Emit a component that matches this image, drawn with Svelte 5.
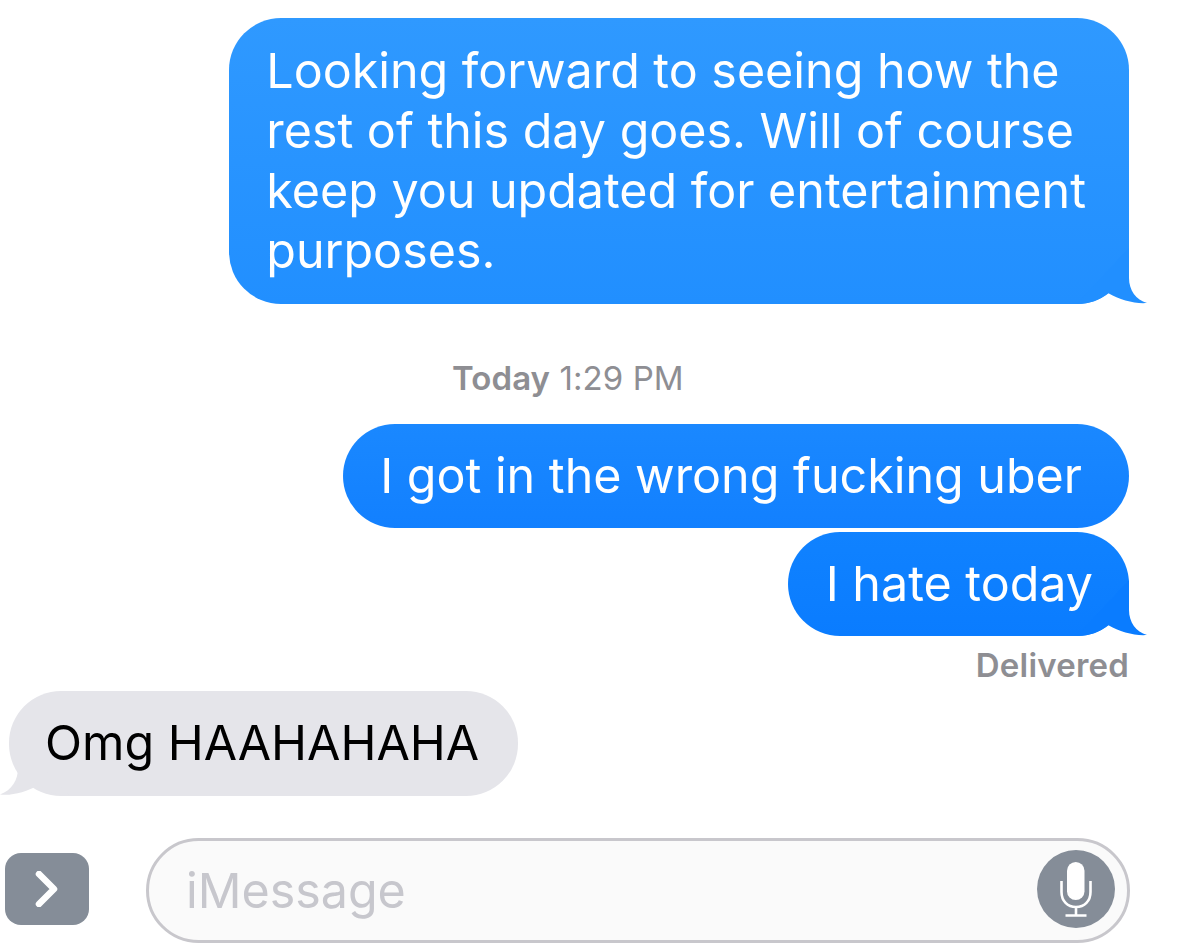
<script>
  const tailRight = "M52 0 V30 C52 42 59 52 70 55 C58 56 43 52 31 45 C23 52 13 56 0 56 Z";
  const tailLeft = "M18 0 V28 C18 40 12 50 0 54.5 C12 56 26 52 39 45 C47 52 57 56 70 56 Z";
</script>

<main class="page">
  <div class="thread">
    <div class="bubble out first">
      <span>Looking forward to seeing how the<br />rest of this day goes. Will of course<br />keep you updated for entertainment<br />purposes.</span>
      <svg class="tail right" width="70" height="56" viewBox="0 0 70 56"><path d={tailRight} fill="#218fff" /></svg>
    </div>

    <p class="stamp"><b>Today</b> 1:29 PM</p>

    <div class="bubble out second"><span>I got in the wrong fucking uber</span></div>
    <div class="bubble out third">
      <span>I hate today</span>
      <svg class="tail right" width="70" height="56" viewBox="0 0 70 56"><path d={tailRight} fill="#0a7cff" /></svg>
    </div>

    <p class="delivered">Delivered</p>

    <div class="bubble in">
      <span>Omg HAAHAHAHA</span>
      <svg class="tail left" width="70" height="56" viewBox="0 0 70 56"><path d={tailLeft} fill="#e5e5ea" /></svg>
    </div>
  </div>

  <div class="composer">
    <button class="expand" aria-label="Expand">
      <svg width="24" height="36" viewBox="0 0 24 36"><path d="M4 3 L19 18 L4 33" fill="none" stroke="#fff" stroke-width="6.5" stroke-linecap="round" stroke-linejoin="round" /></svg>
    </button>
    <div class="field">
      <span class="placeholder">iMessage</span>
      <span class="mic">
        <svg width="78" height="78" viewBox="0 0 78 78">
          <rect x="30" y="12" width="17.5" height="38" rx="8.75" fill="#fff" />
          <path d="M24.5 31 V42 C24.5 51 30.5 57 39 57 C47.5 57 53.5 51 53.5 42 V31 M39 57 V65 M28.5 65.5 H49.5" fill="none" stroke="#fff" stroke-width="2.6" />
        </svg>
      </span>
    </div>
  </div>
</main>

<style>
  :global(body) {
    margin: 0;
    background: #fff;
  }

  .page {
    width: 1190px;
    height: 948px;
    overflow: hidden;
    font-family: Inter, "Liberation Sans", sans-serif;
    background: #fff;
  }

  .thread {
    display: flex;
    flex-direction: column;
    align-items: flex-end;
    padding: 18px 61px 0 9px;
  }

  .bubble {
    position: relative;
    box-sizing: border-box;
    padding: 22px 37px;
    border-radius: 52px;
    font-size: 48.4px;
    line-height: 60px;
    white-space: nowrap;
  }

  .bubble span {
    position: relative;
    z-index: 1;
  }

  .out {
    color: #fff;
  }

  .first {
    padding: 23px 43px 23px 37px;
    background: linear-gradient(#2f99ff, #218fff);
  }

  .second {
    padding-right: 47px;
    background: linear-gradient(#1a88ff, #1280ff);
  }

  .third {
    margin-top: 4px;
    padding-left: 38px;
    padding-right: 36px;
    background: linear-gradient(#1082ff, #0a7cff);
  }

  .in {
    align-self: flex-start;
    padding: 22px 39px 23px 36px;
    background: #e5e5ea;
    color: #000;
  }

  .tail {
    position: absolute;
    bottom: 0;
  }

  .tail.right {
    right: -18px;
  }

  .tail.left {
    left: -9px;
  }

  .stamp,
  .delivered {
    margin: 0;
    color: #8e8e93;
    font-size: 33px;
    line-height: 38px;
  }

  .stamp {
    align-self: flex-start;
    margin: 55px 0 27px 443px;
    letter-spacing: 0.08px;
  }

  .stamp b,
  .delivered {
    font-weight: 600;
  }

  .delivered {
    margin: 10px 0 7px;
    letter-spacing: 0.2px;
  }

  .composer {
    display: flex;
    align-items: flex-start;
    gap: 57px;
    margin-top: 42px;
    padding-left: 5px;
  }

  .expand {
    display: flex;
    align-items: center;
    justify-content: center;
    width: 84px;
    height: 72px;
    margin-top: 15px;
    padding: 0;
    border: 0;
    border-radius: 16px;
    background: #858d98;
  }

  .field {
    box-sizing: border-box;
    display: flex;
    align-items: center;
    justify-content: space-between;
    width: 984px;
    height: 105px;
    padding: 0 12px 0 37px;
    border: 3px solid #c8c7cc;
    border-radius: 52.5px;
    background: #fafafa;
  }

  .placeholder {
    color: #c7c7cd;
    font-size: 48.4px;
  }

  .mic {
    display: block;
    width: 78px;
    height: 78px;
    margin-bottom: 3px;
    border-radius: 50%;
    background: #858d98;
  }

  .mic svg {
    display: block;
  }
</style>
